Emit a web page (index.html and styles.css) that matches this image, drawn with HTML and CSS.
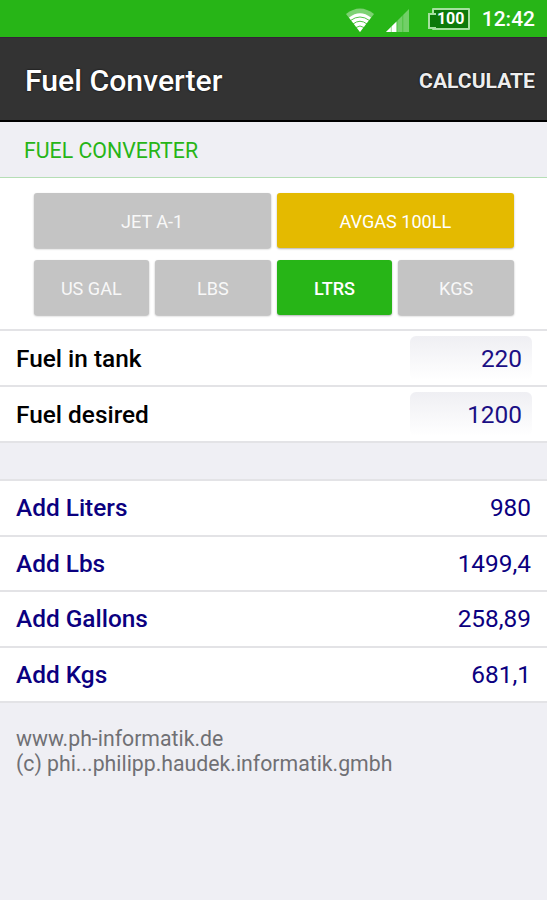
FILE: index.html
```html
<!DOCTYPE html>
<html lang="en">
<head>
    <meta charset="UTF-8">
    <meta name="viewport" content="width=device-width, initial-scale=1.0">
    <title>Fuel Converter</title>
    <link rel="stylesheet" href="styles.css">
</head>
<body>
    <!-- Status Bar -->
    <div class="status-bar">
        <svg class="wifi" width="30" height="24" viewBox="0 0 30 24">
            <path d="M15 24 L1 6 Q15 -5 29 6 Z" fill="#fff" opacity="0.4"/>
            <path d="M15 24 L4 9.500 Q15 1 26 9.500 Z" fill="#fff"/>
            <g fill="none" stroke="#27b517" stroke-width="1" opacity="0.8">
                <path d="M5.500 12.500 Q15 5.500 24.500 12.500"/>
                <path d="M8 16 Q15 10.500 22 16"/>
                <path d="M11 19.500 Q15 16.500 19 19.500"/>
            </g>
        </svg>
        <svg class="signal" width="23" height="23" viewBox="0 0 24 24">
            <path d="M0 24 L24 0 V24 Z" fill="#fff" opacity="0.35"/>
            <path d="M0 24 L11 13 V24 Z" fill="#fff"/>
            <path d="M5.500 18V24 M11.500 12V24 M17.500 6V24" stroke="#27b517" stroke-width="1" opacity="0.5"/>
        </svg>
        <div class="battery"><span>100</span></div>
        <span class="clock">12:42</span>
    </div>

    <!-- Header -->
    <header>
        <h1>Fuel Converter</h1>
        <button class="calculate" type="button">CALCULATE</button>
    </header>

    <h2>FUEL CONVERTER</h2>

    <!-- Fuel type and unit -->
    <div class="options">
        <button class="option wide" type="button">JET A-1</button>
        <button class="option wide fuel-active" type="button">AVGAS 100LL</button>
        <button class="option" type="button">US GAL</button>
        <button class="option" type="button">LBS</button>
        <button class="option unit-active" type="button">LTRS</button>
        <button class="option" type="button">KGS</button>
    </div>

    <form class="list inputs">
        <div class="row">
            <label for="tank">Fuel in tank</label>
            <input type="text" id="tank" value="220">
        </div>
        <div class="row">
            <label for="desired">Fuel desired</label>
            <input type="text" id="desired" value="1200">
        </div>
    </form>

    <!-- Results -->
    <div class="list results">
        <div class="row"><b>Add Liters</b><span>980</span></div>
        <div class="row"><b>Add Lbs</b><span>1499,4</span></div>
        <div class="row"><b>Add Gallons</b><span>258,89</span></div>
        <div class="row"><b>Add Kgs</b><span>681,1</span></div>
    </div>

    <footer>
        <p>www.ph-informatik.de</p>
        <p>(c) phi...philipp.haudek.informatik.gmbh</p>
    </footer>
</body>
</html>
```

FILE: styles.css
```css
* {
    box-sizing: border-box;
}
body {
    font-family: Roboto, sans-serif;
    background-color: #efeff4;
    margin: 0;
    min-height: 100vh;
}
button, input {
    font-family: inherit;
    border: none;
}
h1, h2, p {
    margin: 0;
}

/* Status Bar */
.status-bar {
    display: flex;
    align-items: center;
    justify-content: flex-end;
    height: 37px;
    padding: 2px 12px 0 0;
    background-color: #27b517;
    color: white;
}
.wifi {
    margin: 1px 11px 0 0;
}
.signal {
    margin: 1px 23px 0 0;
}
.battery {
    position: relative;
    width: 38px;
    height: 22px;
    margin: 0 12px 2px 0;
    border: 2px solid #a5e09f;
    border-radius: 1px;
    background-color: #0d7a0a;
    font-size: 16px;
    font-weight: 700;
    line-height: 18px;
    text-align: center;
}
.battery::before {
    content: "";
    position: absolute;
    left: -6px;
    top: 3px;
    width: 6px;
    height: 12px;
    border: 2px solid #a5e09f;
    border-right: none;
    background-color: #0d7a0a;
}
.clock {
    padding-bottom: 1px;
    font-size: 21px;
    font-weight: 500;
}

/* Header */
header {
    display: flex;
    align-items: center;
    justify-content: space-between;
    height: 85px;
    padding: 2px 12px 0 25px;
    background-color: #333;
    border-top: 1px solid #38203a;
    border-bottom: 2px solid #000;
    color: white;
}
h1 {
    font-size: 30.2px;
    font-weight: 500;
    text-shadow: 0 0 2px #000;
}
.calculate {
    padding: 0;
    background: none;
    color: #eee;
    font-size: 21.1px;
    font-weight: 700;
    text-shadow: 0 0 2px #000;
}
h2 {
    height: 56px;
    padding: 1px 0 0 24px;
    border-bottom: 1px solid #b5deb5;
    color: #27b517;
    font-size: 21.3px;
    font-weight: 400;
    line-height: 56px;
}

/* Option buttons */
.options {
    display: grid;
    grid-template-columns: repeat(4, 1fr);
    grid-auto-rows: 55px;
    gap: 12px 6px;
    height: 151px;
    padding: 15px 33px 0 33.5px;
    background-color: white;
}
.option {
    padding: 1px 0 0;
    border-radius: 3px;
    background-color: #c4c4c4;
    box-shadow: 0 1px 2px rgba(0, 0, 0, 0.3);
    color: #f8f8f8;
    font-size: 18.1px;
}
.wide {
    grid-column: span 2;
}
.fuel-active {
    background-color: #e4ba00;
    color: white;
}
.unit-active {
    background-color: #27b517;
    color: white;
    font-weight: 500;
}

/* Lists */
.list {
    background-color: white;
    border-top: 2px solid #e3e3e6;
}
.row {
    display: flex;
    align-items: center;
    justify-content: space-between;
    height: 56px;
    padding: 0 16px;
    border-bottom: 2px solid #e3e3e6;
    font-size: 24.4px;
}
.row label, .row b {
    font-weight: 500;
}
.inputs .row {
    padding-right: 15px;
}
.inputs label {
    padding-top: 1px;
}
.row input {
    width: 122px;
    height: 44px;
    padding: 0 10px;
    border-radius: 6px;
    background: linear-gradient(#efeff3, #fff);
    color: #1b0f85;
    font-size: 24.4px;
    text-align: right;
}
.results {
    margin-top: 36px;
    color: #0b0080;
}
.results .row {
    height: 55.6px;
}

footer {
    padding: 23px 16px;
    color: #707074;
    font-size: 21.25px;
    line-height: 25px;
}
```
